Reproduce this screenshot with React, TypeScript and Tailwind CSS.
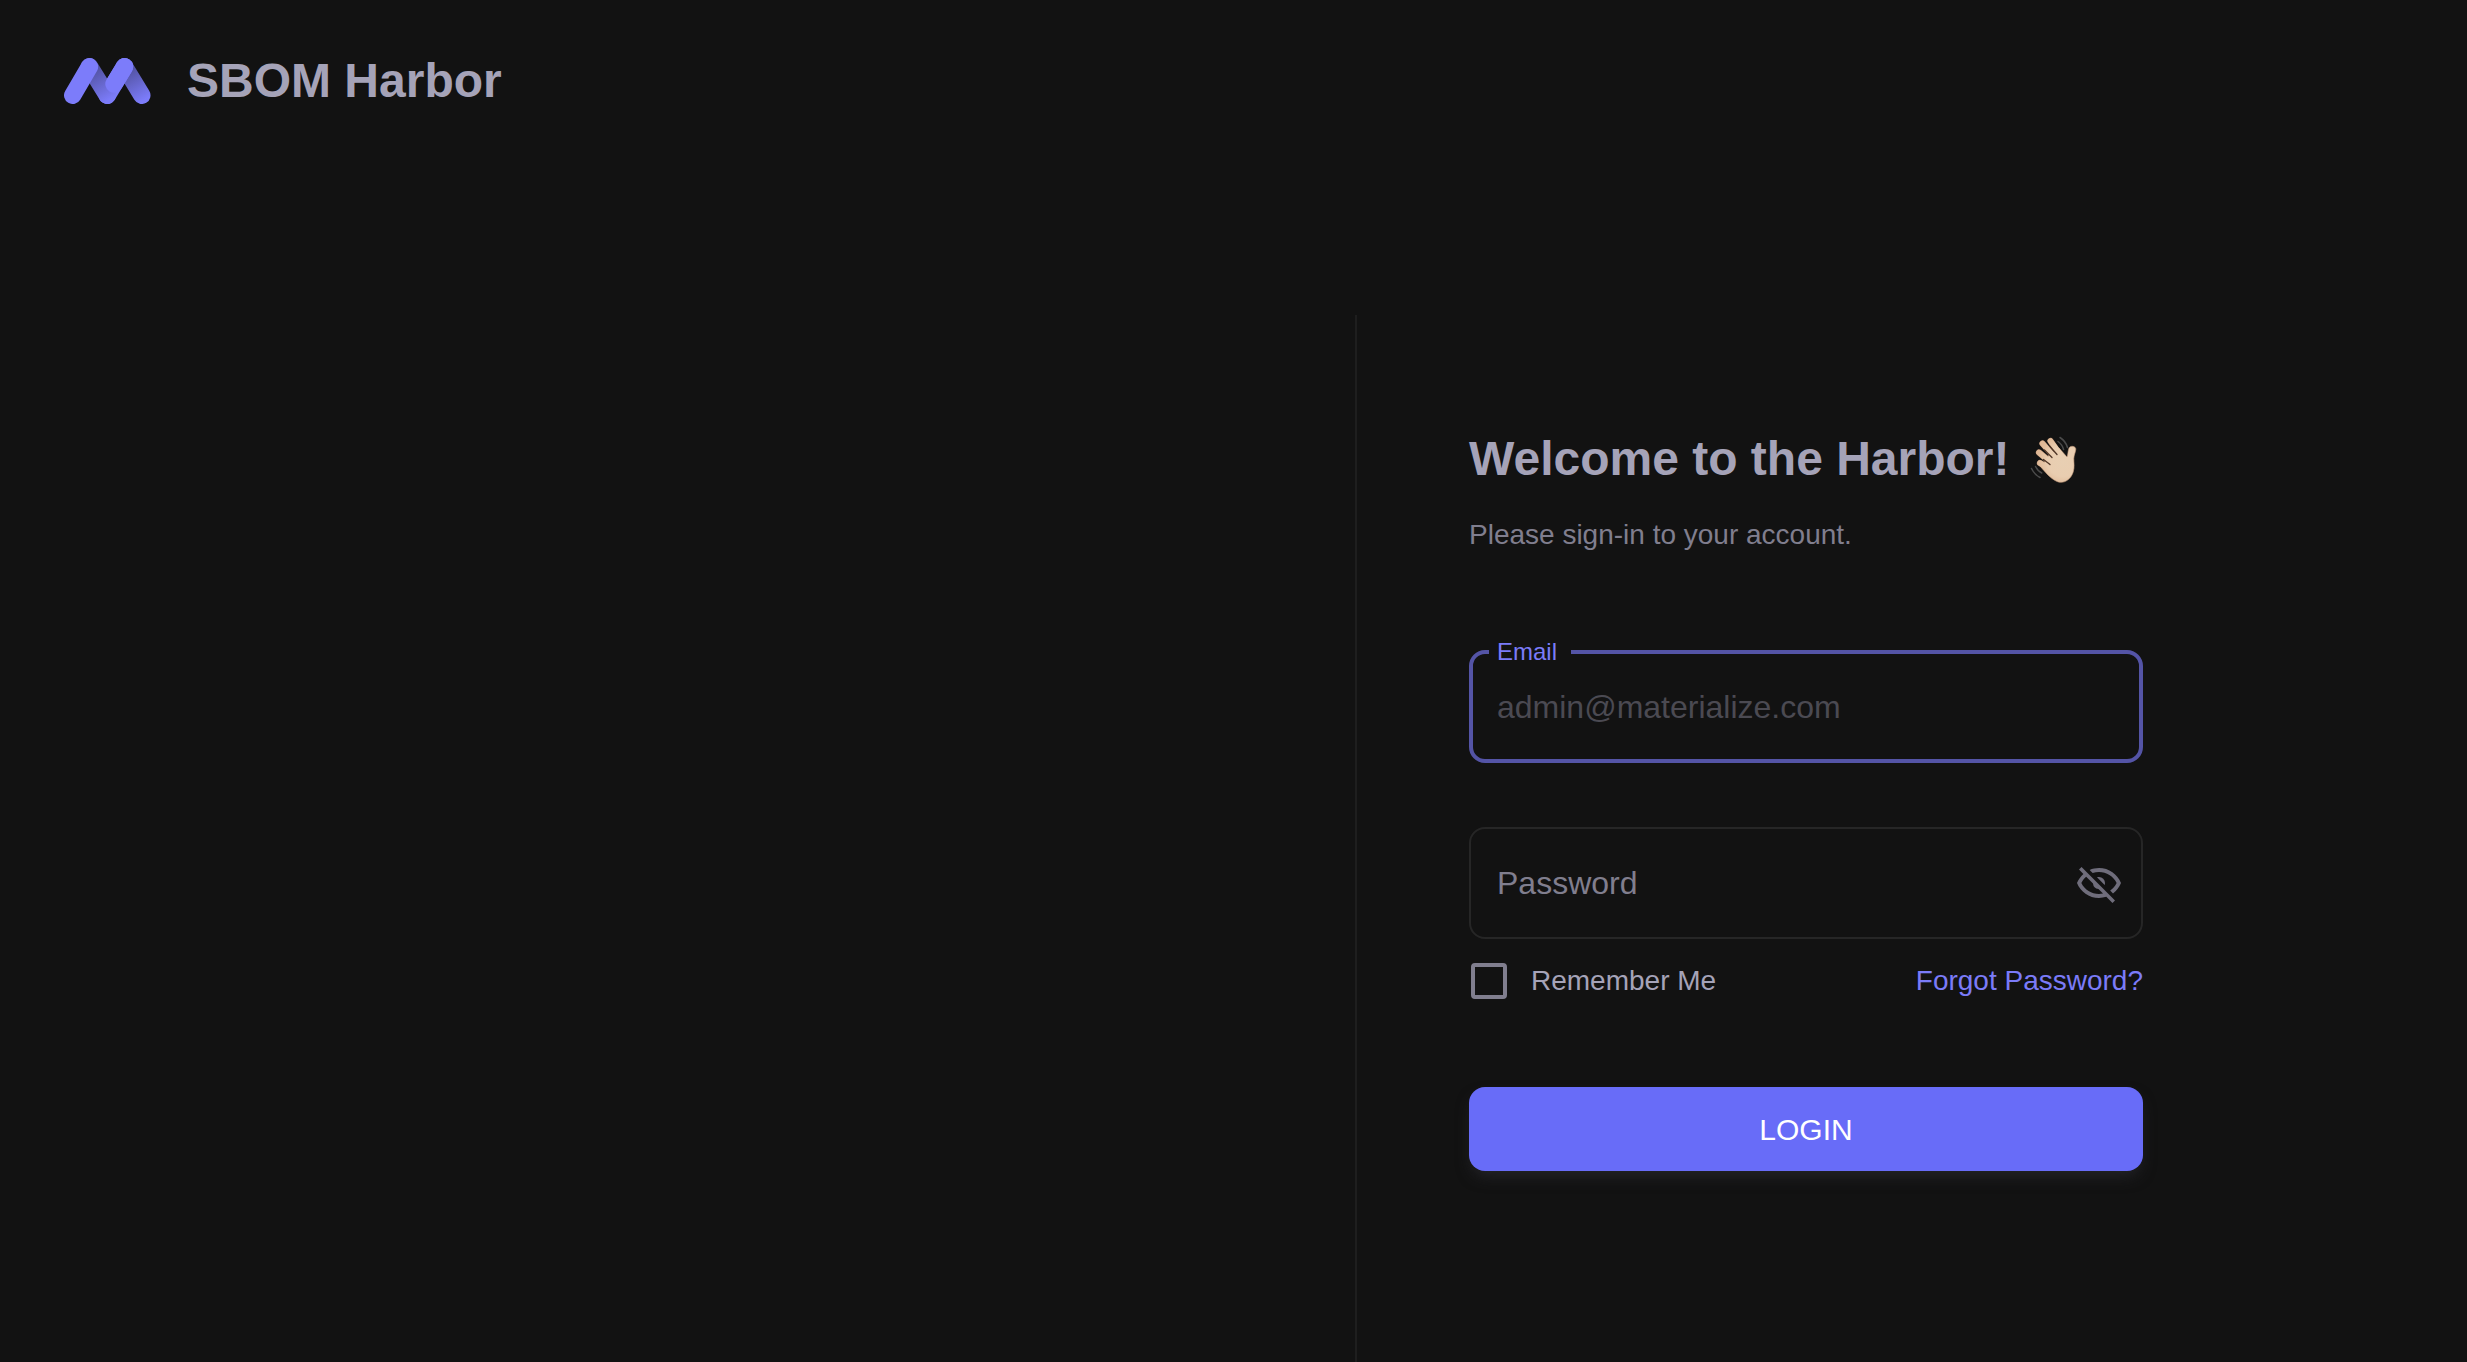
import React, { useState } from 'react';

function Logo() {
  return (
    <svg aria-hidden="true" className="h-[46px] w-[87px]" viewBox="0 0 87 46" fill="none" strokeWidth="17.4" strokeLinecap="round">
      <defs>
        <linearGradient id="fold-a" gradientUnits="userSpaceOnUse" x1="28" y1="12" x2="45" y2="42">
          <stop stopColor="#5252a0" />
          <stop offset="1" stopColor="#7c7cfa" />
        </linearGradient>
        <linearGradient id="fold-b" gradientUnits="userSpaceOnUse" x1="63" y1="12" x2="80" y2="42">
          <stop stopColor="#5252a0" />
          <stop offset="1" stopColor="#7c7cfa" />
        </linearGradient>
      </defs>
      <path d="M60.5 8.7 77.8 37.3" stroke="url(#fold-b)" />
      <path d="M60.5 8.7 43.3 37.3" stroke="#7c7cfa" />
      <path d="M25.5 8.7 43.3 37.3" stroke="url(#fold-a)" />
      <path d="M60.5 8.7 50 26" stroke="#7c7cfa" />
      <path d="M25.5 8.7 8.7 37.3" stroke="#7c7cfa" />
    </svg>
  );
}

function WavingHand() {
  return (
    <svg role="img" aria-label="waving hand" className="h-[50px] w-[50px]" viewBox="0 0 50 50" fill="none" strokeLinecap="round">
      <defs>
        <radialGradient id="skin" gradientUnits="userSpaceOnUse" cx="33" cy="27" r="26">
          <stop stopColor="#e8cfb3" />
          <stop offset="0.6" stopColor="#e9cdb0" />
          <stop offset="1" stopColor="#dfb896" />
        </radialGradient>
      </defs>
      <g stroke="#c49a7b" strokeWidth="6.2">
        <path d="M12.500 9.500 26 25" />
        <path d="M20.500 7 31 22" />
        <path d="M9 18.500 24 31" />
        <path d="M10 29 24 37" />
      </g>
      <path
        d="M13.500 29.500 19 21l10-7 8 9c1-2 .7-5 1.800-8.500 1.200-3.500 7.200-2.500 7 .8-.2 3-1.900 5.700-2 9.200-.1 4 1 8.500-.6 13.500-2 7-9.200 12.500-16.200 9.500C20.500 44.700 15.500 38.500 10 32z"
        fill="url(#skin)"
        stroke="#c99f80"
        strokeWidth="0.6"
      />
      <g stroke="url(#skin)" strokeWidth="5.400">
        <path d="M12.500 9.500 29 28" />
        <path d="M20.500 7 33 24" />
        <path d="M9 18.500 27 34" />
        <path d="M10 29 25 39" />
      </g>
      <g stroke="#4f3526" strokeWidth="1.300">
        <path d="M14.500 16 22 23.500" />
        <path d="M19.500 12 27 20.500" />
        <path d="M13.500 25.500 20 30.500" />
      </g>
      <g stroke="#4b4b4b" strokeWidth="1.500">
        <path d="M28 7.500c3 2 4.700 4.700 5.600 8" />
        <path d="M30 3.500c4 2.600 6.400 6 7.500 10" />
        <path d="M5.500 32.500c1.500 3 3.500 5.200 6.300 6.500" />
        <path d="M1.500 34.500c2 4 4.500 7 8.500 9" />
      </g>
    </svg>
  );
}

function EyeOff() {
  return (
    <svg aria-hidden="true" className="size-12" viewBox="0 0 24 24" fill="currentColor">
      <path d="M2 5.270 3.280 4 20 20.720 18.730 22l-3.080-3.080c-1.150.38-2.370.58-3.650.58-5 0-9.270-3.110-11-7.500.69-1.760 1.790-3.310 3.190-4.540L2 5.270M12 9a3 3 0 0 1 3 3c0 .35-.06.69-.17 1L11 9.170c.31-.11.65-.17 1-.17m0-4.500c5 0 9.270 3.110 11 7.500-.82 2.080-2.210 3.880-4 5.190l-1.420-1.430c1.360-.94 2.480-2.220 3.240-3.760C19.170 8.640 15.760 6.500 12 6.500c-1.090 0-2.160.18-3.160.5L7.300 5.470C8.740 4.850 10.330 4.500 12 4.500M3.180 12c1.650 3.360 5.060 5.500 8.820 5.500.69 0 1.370-.07 2-.21L11.720 15A3 3 0 0 1 9 12.280L5.600 8.870C4.610 9.720 3.780 10.780 3.180 12z" />
    </svg>
  );
}

export default function App() {
  const [visible, setVisible] = useState(false);
  return (
    <div className="flex min-h-screen flex-col bg-[#121212] font-['Liberation_Sans',Arial,sans-serif] text-[#a5a3b8]">
      <header className="flex h-[315px] items-start px-16 pt-[49px]">
        <div className="flex h-16 items-center gap-9">
          <Logo />
          <span className="text-5xl leading-16 font-bold">SBOM Harbor</span>
        </div>
      </header>
      <div className="flex flex-1 justify-end pr-[212px]">
        <main className="w-full max-w-[900px] border-l-2 border-[#1e1e1e] px-28 pt-28 pb-16">
          <h1 className="flex items-center gap-5 text-5xl leading-16 font-bold whitespace-nowrap">
            Welcome to the Harbor!
            <WavingHand />
          </h1>
          <p className="mt-6 text-[28px] leading-10 text-[#807e8e]">Please sign-in to your account.</p>
          <form onSubmit={(e) => e.preventDefault()}>
            <fieldset className="mt-[85px] rounded-2xl border-4 border-[#5454a6] px-4">
              <legend className="pr-3.5 pl-2 text-2xl leading-6 text-[#7b7bf8]">
                <label htmlFor="email">Email</label>
              </legend>
              <input
                id="email"
                type="email"
                placeholder="admin@materialize.com"
                className="mb-2 h-[87px] w-full bg-transparent px-2 text-[32px] outline-none placeholder:text-[#4b4a52]"
              />
            </fieldset>
            <div className="mt-16 flex h-28 items-center rounded-2xl border-2 border-[#262626] pr-[18px] pl-[26px]">
              <input
                type={visible ? 'text' : 'password'}
                aria-label="Password"
                placeholder="Password"
                className="h-full min-w-0 flex-1 bg-transparent text-[32px] outline-none placeholder:text-[#807e8e]"
              />
              <button
                type="button"
                aria-label="toggle password visibility"
                onClick={() => setVisible(!visible)}
                className="text-[#6f6d7b]"
              >
                <EyeOff />
              </button>
            </div>
            <div className="mt-5 flex items-center justify-between text-[28px] leading-11">
              <label className="flex items-center gap-6 pl-0.5">
                <input
                  type="checkbox"
                  className="size-9 appearance-none rounded-sm border-4 border-[#807e8e] checked:bg-[#666cf6]"
                />
                Remember Me
              </label>
              <a href="#forgot" className="text-[#7b7bf8]">
                Forgot Password?
              </a>
            </div>
            <button
              type="submit"
              className="mt-21 h-21 w-full rounded-2xl bg-[#686cf8] text-[30px] text-white shadow-[0_8px_16px_-4px_#26262b]"
            >
              LOGIN
            </button>
          </form>
        </main>
      </div>
    </div>
  );
}
